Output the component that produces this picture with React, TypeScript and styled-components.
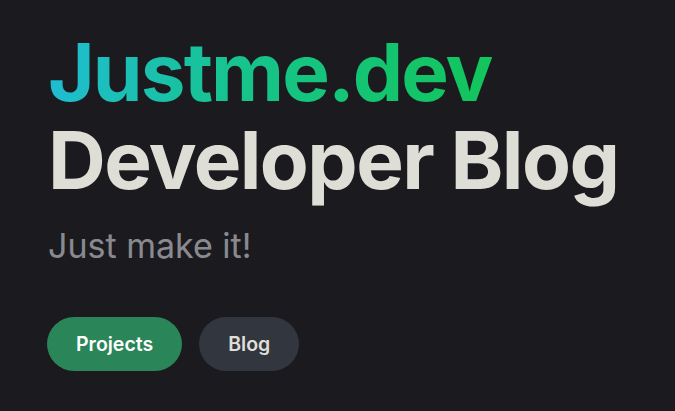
import React from "react";
import styled, { createGlobalStyle } from "styled-components";

const Global = createGlobalStyle`
  html, body { margin: 0; padding: 0; background: #1b1b1f; }
  body { font-family: Inter, "Noto Sans", sans-serif; -webkit-font-smoothing: antialiased; }
`;

const Hero = styled.main`
  box-sizing: border-box;
  width: 675px;
  height: 411px;
  padding: 28px 48px 0;
  display: flex;
  flex-direction: column;
  background: #1b1b1f;
  overflow: hidden;
`;

const Title = styled.h1`
  margin: 0;
  font-size: 80px;
  line-height: 88px;
  font-weight: 700;
  letter-spacing: -1.6px;
  white-space: nowrap;
`;

const Name = styled.span`
  display: block;
  width: fit-content;
  letter-spacing: -1.9px;
  background: linear-gradient(100deg, #20bcd6 0%, #16c48a 45%, #12c55a 100%);
  -webkit-background-clip: text;
  background-clip: text;
  color: transparent;
`;

const Text = styled.span`
  display: block;
  color: rgba(255, 255, 245, 0.86);
`;

const Tagline = styled.p`
  margin: 20px 0 0;
  font-size: 34px;
  line-height: 44px;
  font-weight: 400;
  color: rgba(235, 235, 245, 0.55);
`;

const Actions = styled.div`
  display: flex;
  gap: 17px;
  margin: 49px 0 0 -1px;
`;

const Button = styled.a<{ $variant: "brand" | "alt" }>`
  display: inline-flex;
  align-items: center;
  justify-content: center;
  height: 54px;
  padding: 0 29px;
  border-radius: 27px;
  font-size: 19.5px;
  font-weight: 600;
  text-decoration: none;
  background: ${(p) => (p.$variant === "brand" ? "#2a8558" : "#32363f")};
  color: ${(p) => (p.$variant === "brand" ? "#ffffff" : "rgba(255, 255, 245, 0.86)")};
`;

export default function App() {
  return (
    <>
      <Global />
      <Hero>
        <Title>
          <Name>Justme.dev</Name>
          <Text>Developer Blog</Text>
        </Title>
        <Tagline>Just make it!</Tagline>
        <Actions>
          <Button $variant="brand" href="#">Projects</Button>
          <Button $variant="alt" href="#">Blog</Button>
        </Actions>
      </Hero>
    </>
  );
}
